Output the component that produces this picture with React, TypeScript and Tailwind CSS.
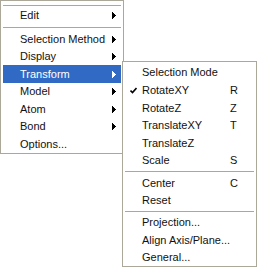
import React from 'react';

type Item =
  | { type: 'sep'; cls: string }
  | { type: 'item'; label: string; cls: string; sub?: boolean; active?: boolean; checked?: boolean; key?: string };

const mainItems: Item[] = [
  { type: 'sep', cls: 'h-[6px] pt-[4px]' },
  { type: 'item', label: 'Edit', sub: true, cls: 'h-[17px]' },
  { type: 'sep', cls: 'h-[6px] pt-[3px]' },
  { type: 'item', label: 'Selection Method', sub: true, cls: 'h-[18px]' },
  { type: 'item', label: 'Display', sub: true, cls: 'h-[17px]' },
  { type: 'item', label: 'Transform', sub: true, active: true, cls: 'h-[18px]' },
  { type: 'item', label: 'Model', sub: true, cls: 'h-[17px]' },
  { type: 'item', label: 'Atom', sub: true, cls: 'h-[18px]' },
  { type: 'item', label: 'Bond', sub: true, cls: 'h-[17px]' },
  { type: 'item', label: 'Options...', cls: 'h-[18px]' },
];

const transformItems: Item[] = [
  { type: 'item', label: 'Selection Mode', cls: 'h-[18px]' },
  { type: 'item', label: 'RotateXY', checked: true, key: 'R', cls: 'h-[18px]' },
  { type: 'item', label: 'RotateZ', key: 'Z', cls: 'h-[18px]' },
  { type: 'item', label: 'TranslateXY', key: 'T', cls: 'h-[17px]' },
  { type: 'item', label: 'TranslateZ', cls: 'h-[18px]' },
  { type: 'item', label: 'Scale', key: 'S', cls: 'h-[17px]' },
  { type: 'sep', cls: 'h-[6px] pt-[2px]' },
  { type: 'item', label: 'Center', key: 'C', cls: 'h-[17px]' },
  { type: 'item', label: 'Reset', cls: 'h-[17px]' },
  { type: 'sep', cls: 'h-[5px] pt-[2px]' },
  { type: 'item', label: 'Projection...', cls: 'h-[17px]' },
  { type: 'item', label: 'Align Axis/Plane...', cls: 'h-[18px]' },
  { type: 'item', label: 'General...', cls: 'h-[17px]' },
];

const Arrow = ({ white }: { white?: boolean }) => (
  <svg width="4" height="7" viewBox="0 0 4 7" className="shrink-0">
    <polygon points="0,0 4,3.5 0,7" fill={white ? '#ffffff' : '#000000'} shapeRendering="crispEdges" />
  </svg>
);

const Check = () => (
  <svg width="7" height="7" viewBox="0 0 7 7" className="shrink-0">
    <path d="M0.5 3.5 L2.5 5.5 L6.5 1" stroke="#000" strokeWidth="1.6" fill="none" />
  </svg>
);

const Separator = ({ cls }: { cls: string }) => (
  <div className={cls}>
    <div className="h-px bg-[#aca899]" />
  </div>
);

const MainRow = ({ item }: { item: Extract<Item, { type: 'item' }> }) => (
  <div
    className={`${item.cls} flex items-center justify-between pl-[17px] pr-[5px] ${
      item.active ? 'bg-[#316ac5] text-white' : 'text-[#111]'
    }`}
  >
    <span className="whitespace-nowrap">{item.label}</span>
    {item.sub && <Arrow white={item.active} />}
  </div>
);

const SubRow = ({ item }: { item: Extract<Item, { type: 'item' }> }) => (
  <div className={`${item.cls} flex items-center text-[#111]`}>
    <div className="w-[17px] flex items-center justify-end pr-[5px]">{item.checked && <Check />}</div>
    <span className="w-[88px] whitespace-nowrap">{item.label}</span>
    <span>{item.key}</span>
  </div>
);

export default function App() {
  return (
    <div
      className="relative w-[258px] h-[268px] bg-white text-[11px] leading-none"
      style={{ fontFamily: '"Liberation Sans", Arial, sans-serif' }}
    >
      <div className="w-[124px] border border-[#aca899] bg-white px-[2px]">
        {mainItems.map((it, i) =>
          it.type === 'sep' ? <Separator key={i} cls={it.cls} /> : <MainRow key={i} item={it} />
        )}
      </div>

      <div className="absolute left-[122px] top-[61px] w-[135px] border border-[#aca899] bg-white px-[2px] pt-[1px]">
        {transformItems.map((it, i) =>
          it.type === 'sep' ? <Separator key={i} cls={it.cls} /> : <SubRow key={i} item={it} />
        )}
      </div>
    </div>
  );
}
